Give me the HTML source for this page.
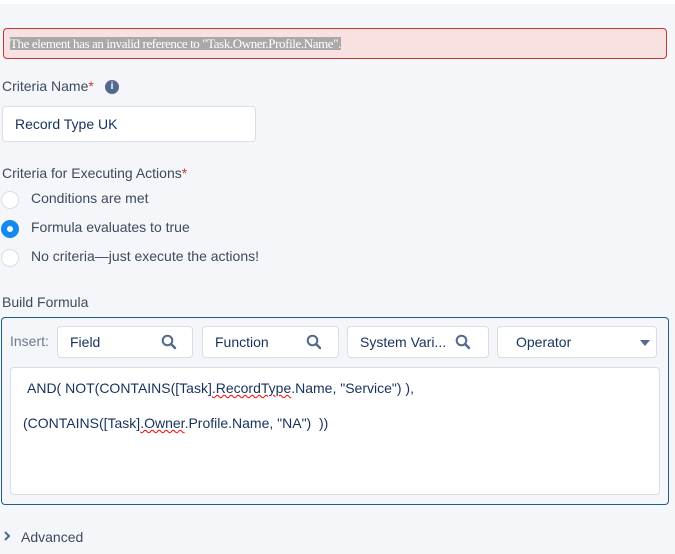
<!DOCTYPE html>
<html><head><style>
body{margin:0;width:675px;height:554px;background:#f4f6f9;font-family:"Liberation Sans",sans-serif;color:#3e4a5c;position:relative;overflow:hidden;font-size:14px}
.a{position:absolute}
.err{left:3px;top:28px;width:662px;height:29px;border:1px solid #c23934;border-radius:4px;background:#f9e1e1}
.err span{position:absolute;left:6px;top:8px;font-family:"Liberation Serif",serif;font-size:13px;background:#a9a9a9;color:#fff;line-height:13px;letter-spacing:-0.4px}
.in{background:#fff;border:1px solid #d8dde6;border-radius:4px}
.radio{width:16px;height:16px;border:1px solid #d8dde6;border-radius:50%;background:#fff}
.req{color:#c23934}
.sq{font-size:14px;color:#16325c}
u{text-decoration:underline wavy red;text-decoration-thickness:1px}
svg.s{position:absolute;top:7px}
</style></head><body>
<div class="a" style="left:0;top:0;width:675px;height:4px;background:#fff"></div>
<div class="a err"><span>The element has an invalid reference to "Task.Owner.Profile.Name".</span></div>
<div class="a" style="left:2px;top:78px">Criteria Name<span class="req">*</span></div>
<div class="a" style="left:105px;top:80px;width:14px;height:14px;border-radius:50%;background:#54698d;color:#fff;font-size:10px;text-align:center;line-height:14px;font-weight:bold">i</div>
<div class="a in" style="left:2px;top:106px;width:252px;height:34px"><span class="a sq" style="left:12px;top:9px">Record Type UK</span></div>
<div class="a" style="left:2px;top:165px">Criteria for Executing Actions<span class="req">*</span></div>
<div class="a radio" style="left:1px;top:191px"></div><div class="a" style="left:31px;top:190px">Conditions are met</div>
<div class="a radio" style="left:1px;top:220px;border-color:#1589ee;background:#1589ee"><div style="width:6px;height:6px;border-radius:50%;background:#fff;margin:5px"></div></div><div class="a" style="left:31px;top:219px">Formula evaluates to true</div>
<div class="a radio" style="left:1px;top:249px"></div><div class="a" style="left:31px;top:248px">No criteria—just execute the actions!</div>
<div class="a" style="left:2px;top:294px">Build Formula</div>
<div class="a" style="left:1px;top:317px;width:666px;height:186px;border:1px solid #1b5f8a;border-radius:4px;background:#f4f6f9"></div>
<div class="a" style="left:10px;top:333px;color:#6c7a8d">Insert:</div>
<div class="a in" style="left:57px;top:326px;width:134px;height:30px"><span class="a sq" style="left:12px;top:7px">Field</span><svg class="s" style="left:103px" width="16" height="16" viewBox="0 0 16 16"><circle cx="6.5" cy="6.5" r="4.8" fill="none" stroke="#54698d" stroke-width="2"/><path d="M10 10L14 14" stroke="#54698d" stroke-width="2.4" stroke-linecap="round"/></svg></div>
<div class="a in" style="left:202px;top:326px;width:135px;height:30px"><span class="a sq" style="left:12px;top:7px">Function</span><svg class="s" style="left:103px" width="16" height="16" viewBox="0 0 16 16"><circle cx="6.5" cy="6.5" r="4.8" fill="none" stroke="#54698d" stroke-width="2"/><path d="M10 10L14 14" stroke="#54698d" stroke-width="2.4" stroke-linecap="round"/></svg></div>
<div class="a in" style="left:347px;top:326px;width:140px;height:30px"><span class="a sq" style="left:12px;top:7px">System Vari...</span><svg class="s" style="left:107px" width="16" height="16" viewBox="0 0 16 16"><circle cx="6.5" cy="6.5" r="4.8" fill="none" stroke="#54698d" stroke-width="2"/><path d="M10 10L14 14" stroke="#54698d" stroke-width="2.4" stroke-linecap="round"/></svg></div>
<div class="a in" style="left:497px;top:326px;width:158px;height:30px"><span class="a sq" style="left:18px;top:7px">Operator</span><span class="a" style="left:142px;top:13px;width:0;height:0;border-left:5px solid transparent;border-right:5px solid transparent;border-top:6px solid #54698d"></span></div>
<div class="a in" style="left:10px;top:367px;width:648px;height:126px">
<span class="a sq" style="left:16px;top:12px">AND( NOT(CONTAINS([Task]<u>.RecordType</u>.Name, "Service") ),</span>
<span class="a sq" style="left:12px;top:47px">(CONTAINS([Task]<u>.Owner</u>.Profile.Name, "NA")&nbsp; ))</span>
</div>
<svg class="a" style="left:3px;top:531px" width="8" height="10" viewBox="0 0 8 10"><path d="M2 1L6 5L2 9" fill="none" stroke="#54698d" stroke-width="2"/></svg>
<div class="a" style="left:21px;top:529px">Advanced</div>
</body></html>
